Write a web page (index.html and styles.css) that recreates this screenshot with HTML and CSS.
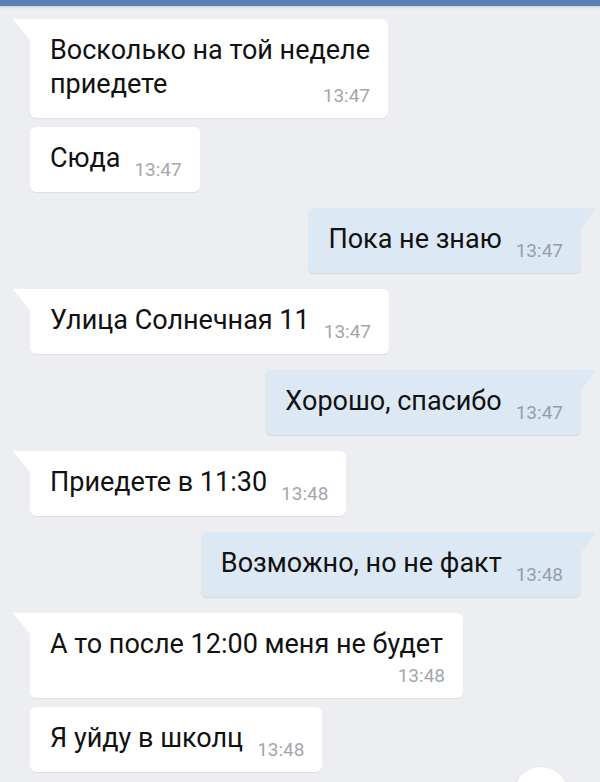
FILE: index.html
```html
<!DOCTYPE html>
<html lang="ru">
<head>
    <meta charset="UTF-8">
    <meta name="viewport" content="width=device-width, initial-scale=1.0">
    <title>Диалог</title>
    <link rel="stylesheet" href="styles.css">
</head>
<body>
    <!-- Header strip -->
    <div class="topbar"></div>

    <!-- Message list -->
    <div class="chat">
        <div class="msg in tail">
            <span class="text">Восколько на той неделе<br>приедете</span>
            <span class="time">13:47</span>
        </div>
        <div class="msg in">
            <span class="text">Сюда</span>
            <span class="time">13:47</span>
        </div>
        <div class="msg out tail">
            <span class="text">Пока не знаю</span>
            <span class="time">13:47</span>
        </div>
        <div class="msg in tail">
            <span class="text">Улица Солнечная 11</span>
            <span class="time">13:47</span>
        </div>
        <div class="msg out tail">
            <span class="text">Хорошо, спасибо</span>
            <span class="time">13:47</span>
        </div>
        <div class="msg in tail">
            <span class="text">Приедете в 11:30</span>
            <span class="time">13:48</span>
        </div>
        <div class="msg out tail">
            <span class="text">Возможно, но не факт</span>
            <span class="time">13:48</span>
        </div>
        <div class="msg in tail stacked">
            <span class="text">А то после 12:00 меня не будет</span>
            <span class="time">13:48</span>
        </div>
        <div class="msg in">
            <span class="text">Я уйду в школц</span>
            <span class="time">13:48</span>
        </div>
    </div>

    <!-- Floating scroll button, mostly below the fold -->
    <div class="fab"></div>
</body>
</html>
```

FILE: styles.css
```css
/* Page */
body {
    margin: 0;
    background-color: #edeef1;
    font-family: Roboto, "Noto Sans", sans-serif;
    height: 782px;
    overflow: hidden;
    position: relative;
}

/* Blue header edge at the top */
.topbar {
    height: 6px;
    background-color: #5b7fb6;
    box-shadow: 0 1px 3px rgba(0, 0, 0, 0.15);
}

/* Message column */
.chat {
    display: flex;
    flex-direction: column;
    align-items: flex-start;
    padding: 13px 19px 0 30px;
}

/* Bubble (flex item, so it contains the floated time) */
.msg {
    position: relative;
    max-width: 395px;
    padding: 14px 18px 11px 20px;
    margin-top: 16px;
    border-radius: 6px;
    background-color: #fff;
    box-shadow: 0 1px 1px rgba(0, 0, 0, 0.07);
}

.msg:first-child {
    margin-top: 0;
}

/* Same sender in a row sits closer */
.in + .in,
.out + .out {
    margin-top: 9px;
}

.msg.out {
    align-self: flex-end;
    background-color: #dde8f5;
    box-shadow: 0 1px 1px rgba(40, 80, 130, 0.14);
}

.text {
    font-size: 27px;
    line-height: 34px;
    color: #111;
}

/* Time rides at the end of the last line, or drops below it */
.time {
    float: right;
    margin: 18px 0 0 14px;
    font-size: 19px;
    line-height: 22px;
    color: #a3a7ac;
}

.out .time {
    color: #949fab;
}

.stacked .time {
    margin-top: 4px;
}

/* Corner tail on the first bubble of a group */
.tail.in {
    border-top-left-radius: 0;
}

.tail.out {
    border-top-right-radius: 0;
}

.tail::before {
    content: "";
    position: absolute;
    top: 0;
    height: 21px;
}

.tail.in::before {
    left: -17px;
    width: 17px;
    background-color: #fff;
    clip-path: polygon(0 0, 100% 0, 100% 100%);
}

.tail.out::before {
    right: -15px;
    width: 15px;
    background-color: #dde8f5;
    clip-path: polygon(0 0, 100% 0, 0 100%);
}

/* Round button peeking at the bottom */
.fab {
    position: absolute;
    left: 514px;
    top: 767px;
    width: 54px;
    height: 54px;
    border-radius: 50%;
    background-color: #fff;
    box-shadow: 0 1px 3px rgba(0, 0, 0, 0.1);
}
```
